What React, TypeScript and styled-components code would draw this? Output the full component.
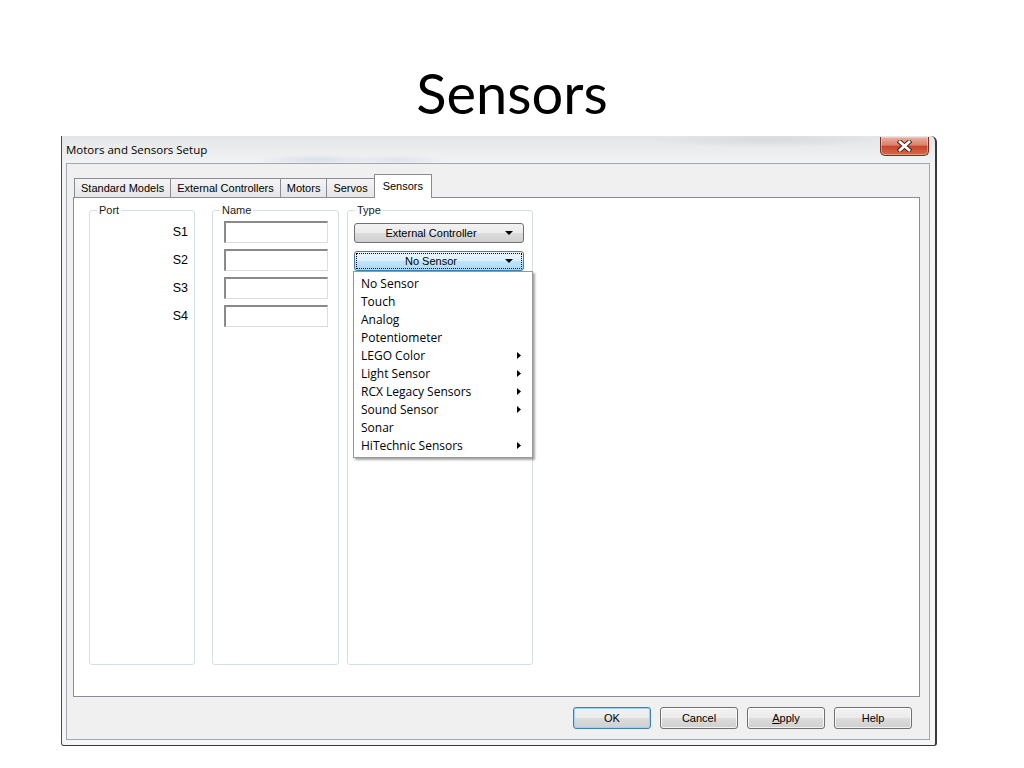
import React from "react";
import styled, { createGlobalStyle } from "styled-components";

const ports = ["S1", "S2", "S3", "S4"];
const sensorTypes = [
  { label: "No Sensor", sub: false },
  { label: "Touch", sub: false },
  { label: "Analog", sub: false },
  { label: "Potentiometer", sub: false },
  { label: "LEGO Color", sub: true },
  { label: "Light Sensor", sub: true },
  { label: "RCX Legacy Sensors", sub: true },
  { label: "Sound Sensor", sub: true },
  { label: "Sonar", sub: false },
  { label: "HiTechnic Sensors", sub: true },
];
const tabs = ["Standard Models", "External Controllers", "Motors", "Servos", "Sensors"];

const GlobalStyle = createGlobalStyle`
  html, body {
    margin: 0;
    padding: 0;
    background: #fff;
  }
  body {
    font-family: "Liberation Sans", Arial, sans-serif;
    font-size: 11px;
    color: #000;
  }
`;

const Page = styled.div`
  width: 1024px;
  height: 768px;
  padding-top: 60px;
  box-sizing: border-box;
  overflow: hidden;
`;

const SlideTitle = styled.h1`
  margin: 0 0 10px;
  text-align: center;
  font-family: Lato, "Open Sans", sans-serif;
  font-weight: 400;
  font-size: 56px;
  line-height: 66px;
`;

const Window = styled.div`
  margin-left: 61px;
  width: 876px;
  box-sizing: border-box;
  padding: 0 5px 5px 4px;
  border-left: 1px solid #4a4a4a;
  border-right: 2px solid #3a3a3a;
  border-bottom: 1px solid #3a3a3a;
  border-top-right-radius: 6px;
  border-bottom-left-radius: 3px;
  border-bottom-right-radius: 3px;
  background: linear-gradient(#e4e5e7, #f3f4f5 30px, #f5f6f7);
`;

const TitleBar = styled.div`
  height: 27px;
  display: flex;
  justify-content: space-between;
  align-items: flex-start;
  background:
    radial-gradient(ellipse 60px 6px at 250px 24px, rgba(120, 140, 200, 0.18), transparent),
    radial-gradient(ellipse 50px 5px at 330px 24px, rgba(120, 140, 200, 0.15), transparent),
    radial-gradient(ellipse 120px 8px at 700px 4px, rgba(0, 0, 0, 0.06), transparent);
`;

const TitleText = styled.span`
  font-family: "Open Sans", sans-serif;
  font-size: 11.5px;
  line-height: 27px;
  color: #000;
`;

const CloseButton = styled.div`
  width: 49px;
  height: 19px;
  margin: 1px 1px 0 0;
  box-sizing: border-box;
  display: flex;
  align-items: center;
  justify-content: center;
  border: 1px solid #7f2b1f;
  border-top: none;
  border-radius: 0 0 5px 5px;
  background: linear-gradient(#eab0a2, #dc806b 45%, #c8462b 52%, #d66a4a);
  box-shadow: inset 0 0 0 1px rgba(255, 255, 255, 0.35);
`;

const Client = styled.div`
  height: 577px;
  box-sizing: border-box;
  padding: 10px 9px 0 6px;
  border: 1px solid #a3a6aa;
  background: #f0f0f0;
`;

const TabStrip = styled.div`
  height: 23px;
  display: flex;
  align-items: flex-end;
  padding-left: 2px;
`;

const Tab = styled.div<{ $active?: boolean }>`
  position: relative;
  box-sizing: border-box;
  margin-left: -1px;
  border: 1px solid #898c95;
  border-bottom: none;
  white-space: nowrap;
  ${(p) =>
    p.$active
      ? `
    z-index: 1;
    height: 24px;
    margin-bottom: -1px;
    padding: 3px 8px 0;
    line-height: 16px;
    background: #fff;
  `
      : `
    height: 19px;
    padding: 0 6px;
    line-height: 18px;
    background: linear-gradient(#f4f4f4, #e6e6e6);
  `}
`;

const TabPanel = styled.div`
  height: 500px;
  box-sizing: border-box;
  padding: 6px 0 0 15px;
  border: 1px solid #898c95;
  background: #fff;
  display: flex;
  align-items: flex-start;
`;

const Group = styled.fieldset<{ $width: number; $gap: number }>`
  width: ${(p) => p.$width}px;
  height: 461px;
  box-sizing: border-box;
  margin: 0 0 0 ${(p) => p.$gap}px;
  padding: 0;
  border: 1px solid #d5dfe5;
  border-radius: 3px;
  min-width: 0;
`;

const Legend = styled.legend`
  margin-left: 7px;
  padding: 0 2px;
  font-size: 11px;
  line-height: 13px;
  color: #1a1a1a;
`;

const Column = styled.div<{ $pad: string; $gap: number }>`
  display: flex;
  flex-direction: column;
  gap: ${(p) => p.$gap}px;
  padding: ${(p) => p.$pad};
`;

const PortLabel = styled.div`
  height: 22px;
  line-height: 22px;
  text-align: right;
  font-size: 12.5px;
`;

const NameInput = styled.div`
  width: 104px;
  height: 22px;
  box-sizing: border-box;
  border-top: 2px solid #8a8a8a;
  border-left: 2px solid #8a8a8a;
  border-right: 1px solid #dcdcdc;
  border-bottom: 1px solid #dcdcdc;
  background: #fff;
`;

const ComboWrap = styled.div`
  position: relative;
`;

const Combo = styled.div<{ $focused?: boolean }>`
  width: 170px;
  height: 20px;
  box-sizing: border-box;
  padding: 1px;
  border: 1px solid ${(p) => (p.$focused ? "#3c7fb1" : "#707070")};
  border-radius: 3px;
  background: ${(p) =>
    p.$focused
      ? "linear-gradient(#eaf6fd 0%, #d9f0fc 49%, #bee6fd 50%, #a7d9f5 100%)"
      : "linear-gradient(#f2f2f2 0%, #ebebeb 49%, #dddddd 50%, #cfcfcf 100%)"};
`;

const ComboInner = styled.div<{ $focused?: boolean }>`
  height: 100%;
  box-sizing: border-box;
  display: flex;
  align-items: center;
  border: 1px dotted ${(p) => (p.$focused ? "#000" : "transparent")};
`;

const ComboText = styled.span`
  flex: 1;
  text-align: center;
  font-size: 11px;
  line-height: 14px;
`;

const ComboArrow = styled.span`
  width: 16px;
  display: flex;
  justify-content: flex-start;
  align-items: center;
`;

const Menu = styled.div`
  position: absolute;
  top: 20px;
  left: -1px;
  z-index: 5;
  width: 180px;
  box-sizing: border-box;
  padding: 2px 0 3px;
  border: 1px solid #979797;
  background: #fff;
  box-shadow: 2px 2px 2px rgba(0, 0, 0, 0.35);
`;

const MenuItem = styled.div`
  height: 18px;
  display: flex;
  align-items: center;
  justify-content: space-between;
  padding: 0 11px 0 7px;
  font-family: "Open Sans", sans-serif;
  font-size: 12px;
  color: #000;
`;

const Footer = styled.div`
  display: flex;
  justify-content: flex-end;
  gap: 9px;
  padding: 10px 8px 0 0;
`;

const Button = styled.div<{ $default?: boolean }>`
  width: 78px;
  height: 22px;
  box-sizing: border-box;
  display: flex;
  align-items: center;
  justify-content: center;
  font-size: 11px;
  border: 1px solid ${(p) => (p.$default ? "#3c7fb1" : "#707070")};
  border-radius: 3px;
  background: linear-gradient(#f2f2f2 0%, #ebebeb 49%, #dddddd 50%, #cfcfcf 100%);
  box-shadow: ${(p) =>
    p.$default ? "inset 0 0 0 1px #9fd3f2" : "inset 0 0 0 1px rgba(255,255,255,0.7)"};

  u {
    text-decoration: underline;
  }
`;

const DownArrow = () => (
  <svg width="8" height="4" viewBox="0 0 8 4">
    <polygon points="0,0 8,0 4,4" fill="#000" />
  </svg>
);

const RightArrow = () => (
  <svg width="4" height="7" viewBox="0 0 4 7">
    <polygon points="0,0 4,3.5 0,7" fill="#000" />
  </svg>
);

const CloseIcon = () => (
  <svg width="15" height="12" viewBox="0 0 15 12">
    <path d="M3 2 L12 10 M12 2 L3 10" stroke="#4a1810" strokeWidth="4.6" strokeLinecap="square" />
    <path d="M3 2 L12 10 M12 2 L3 10" stroke="#fff" strokeWidth="2.8" strokeLinecap="square" />
  </svg>
);

export default function App() {
  return (
    <Page>
      <GlobalStyle />
      <SlideTitle>Sensors</SlideTitle>
      <Window>
        <TitleBar>
          <TitleText>Motors and Sensors Setup</TitleText>
          <CloseButton>
            <CloseIcon />
          </CloseButton>
        </TitleBar>
        <Client>
          <TabStrip>
            {tabs.map((t) => (
              <Tab key={t} $active={t === "Sensors"}>
                {t}
              </Tab>
            ))}
          </TabStrip>
          <TabPanel>
            <Group $width={106} $gap={0}>
              <Legend>Port</Legend>
              <Column $pad="4px 6px 0 0" $gap={6}>
                {ports.map((p) => (
                  <PortLabel key={p}>{p}</PortLabel>
                ))}
              </Column>
            </Group>
            <Group $width={127} $gap={17}>
              <Legend>Name</Legend>
              <Column $pad="4px 0 0 11px" $gap={6}>
                {ports.map((p) => (
                  <NameInput key={p} />
                ))}
              </Column>
            </Group>
            <Group $width={186} $gap={8}>
              <Legend>Type</Legend>
              <Column $pad="6px 0 0 6px" $gap={8}>
                <Combo>
                  <ComboInner>
                    <ComboText>External Controller</ComboText>
                    <ComboArrow>
                      <DownArrow />
                    </ComboArrow>
                  </ComboInner>
                </Combo>
                <ComboWrap>
                  <Combo $focused>
                    <ComboInner $focused>
                      <ComboText>No Sensor</ComboText>
                      <ComboArrow>
                        <DownArrow />
                      </ComboArrow>
                    </ComboInner>
                  </Combo>
                  <Menu>
                    {sensorTypes.map((s) => (
                      <MenuItem key={s.label}>
                        <span>{s.label}</span>
                        {s.sub && <RightArrow />}
                      </MenuItem>
                    ))}
                  </Menu>
                </ComboWrap>
              </Column>
            </Group>
          </TabPanel>
          <Footer>
            <Button $default>OK</Button>
            <Button>Cancel</Button>
            <Button>
              <span>
                <u>A</u>pply
              </span>
            </Button>
            <Button>Help</Button>
          </Footer>
        </Client>
      </Window>
    </Page>
  );
}
